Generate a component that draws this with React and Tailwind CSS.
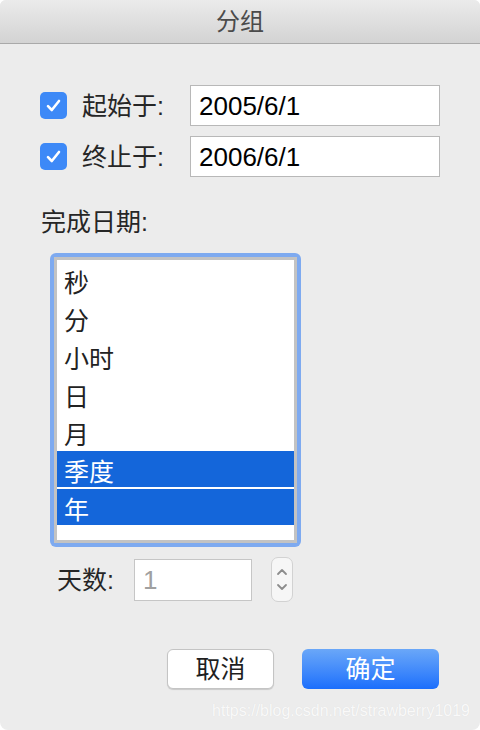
import React from "react";

const FONT = {
  fontFamily: '"Liberation Sans", "Noto Sans CJK SC", sans-serif',
};

function Check() {
  return (
    <div className="w-[27px] h-[27px] rounded-[5px] bg-[#3d89f7] flex items-center justify-center shrink-0">
      <svg width="17" height="17" viewBox="0 0 17 17" fill="none">
        <path
          d="M3 9.2 L6.8 13 L14 4"
          stroke="white"
          strokeWidth="2.6"
          strokeLinecap="round"
          strokeLinejoin="round"
        />
      </svg>
    </div>
  );
}

function DateRow({ label, value }) {
  return (
    <div className="flex items-center h-[41px]">
      <Check />
      <div className="flex-1 ml-[15px] text-[25px] leading-[30px] text-[#262626]">{label}</div>
      <div className="w-[250px] h-full bg-white border border-[#b8b8b8] flex items-center pl-[8px] text-[26px] leading-[30px] text-black">
        {value}
      </div>
    </div>
  );
}

const ITEMS = ["秒", "分", "小时", "日", "月", "季度", "年"];
const SELECTED = ["季度", "年"];

export default function App() {
  return (
    <div className="w-[480px] h-[730px] bg-white" style={FONT}>
      <div className="h-full flex flex-col bg-[#ececec] rounded-t-[6px] rounded-b-[8px] overflow-hidden">
        {/* title bar */}
        <div className="h-[44px] shrink-0 bg-gradient-to-b from-[#ebebeb] to-[#d3d3d3] border-b border-[#a9a9a9] flex items-center justify-center text-[24px] leading-[30px] text-[#4b4b4b]">
          分组
        </div>

        <div className="px-[40px] pt-[41px] flex flex-col">
          <div className="flex flex-col gap-[10px]">
            <DateRow label="起始于:" value="2005/6/1" />
            <DateRow label="终止于:" value="2006/6/1" />
          </div>

          <div className="mt-[30px] ml-[1px] text-[25px] leading-[30px] text-[#262626]">完成日期:</div>

          {/* list box */}
          <div className="mt-[16px] ml-[10px] w-[251px] p-[4px] bg-[#7eaaf0] rounded-[6px]">
            <div className="border-[3px] border-[#c3c3c3] bg-white h-[286px] pt-[1px]">
              {ITEMS.map((it) => {
                const sel = SELECTED.includes(it);
                return (
                  <div
                    key={it}
                    className={
                      sel
                        ? "h-[38px] border-b-2 border-white bg-[#1466da] text-white text-[25px] leading-[30px] pl-[7px] pt-[5px] flex items-center"
                        : "h-[38px] text-[#222] text-[25px] leading-[30px] pl-[7px] pt-[5px] flex items-center"
                    }
                  >
                    {it}
                  </div>
                );
              })}
            </div>
          </div>

          {/* days */}
          <div className="mt-[10px] ml-[17px] flex items-center">
            <div className="w-[77px] text-[25px] leading-[30px] text-[#262626]">天数:</div>
            <div className="w-[118px] h-[42px] bg-white border border-[#c6c6c6] flex items-center pl-[8px] text-[26px] leading-[30px] text-[#a0a0a0]">
              1
            </div>
            <div className="ml-[19px] w-[22px] h-[45px] rounded-[7px] border border-[#d2d2d2] bg-[#f6f6f6] flex flex-col items-center justify-center gap-[7px]">
              <svg width="12" height="8" viewBox="0 0 12 8" fill="none">
                <path d="M2 6 L6 2 L10 6" stroke="#8c8c8c" strokeWidth="1.8" strokeLinecap="round" strokeLinejoin="round" />
              </svg>
              <svg width="12" height="8" viewBox="0 0 12 8" fill="none">
                <path d="M2 2 L6 6 L10 2" stroke="#8c8c8c" strokeWidth="1.8" strokeLinecap="round" strokeLinejoin="round" />
              </svg>
            </div>
          </div>

          {/* buttons */}
          <div className="mt-[47px] flex justify-end gap-[28px] pr-[1px]">
            <div className="w-[107px] h-[40px] rounded-[6px] bg-white border border-[#c4c4c4] shadow-[0_1px_1px_rgba(0,0,0,0.15)] flex items-center justify-center text-[25px] leading-[30px] text-[#1f1f1f]">
              取消
            </div>
            <div className="w-[137px] h-[40px] rounded-[6px] bg-gradient-to-b from-[#6aa7f8] to-[#1a6efc] flex items-center justify-center text-[25px] leading-[30px] text-white">
              确定
            </div>
          </div>

          <div className="mt-[11px] mr-[-30px] flex justify-end text-[16px] leading-[22px] text-[#f9f9f9] [text-shadow:0_0_1px_rgba(0,0,0,0.08)]">
            https://blog.csdn.net/strawberry1019
          </div>
        </div>
      </div>
    </div>
  );
}
